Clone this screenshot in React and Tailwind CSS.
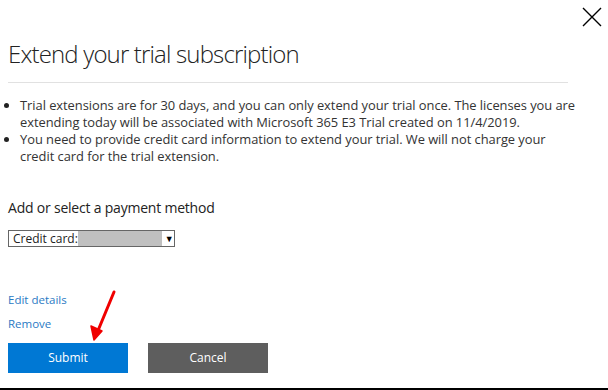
export default function App() {
  return (
    <div className="relative flex h-[390px] w-[608px] flex-col overflow-hidden border-b-2 border-black bg-white font-['Open_Sans',sans-serif] text-[#222]">
      <div className="flex justify-end pt-[7px] pr-[6px]">
        <button type="button" className="h-5 w-5 text-black">
          <svg viewBox="0 0 20 20" className="h-5 w-5" fill="none" stroke="currentColor" strokeWidth="1.4">
            <path d="M1 1 L19 19 M19 1 L1 19" />
          </svg>
        </button>
      </div>

      <div className="pl-2 pr-8">
        <h1 className="mt-[11px] text-[24px] font-light leading-[32px] tracking-[-0.035em] text-[#222]">
          Extend your trial subscription
        </h1>
        <div className="mt-[12px] h-px w-[560px] bg-[#e1e1e1]" />

        <ul className="mt-[14px] list-disc whitespace-nowrap pl-[12px] text-[12.9px] leading-[17px] tracking-[-0.003em] text-[#333] marker:text-[#222]">
          <li>
            Trial extensions are for 30 days, and you can only extend your trial once. The licenses you are
            <br />
            extending today will be associated with Microsoft 365 E3 Trial created on 11/4/2019.
          </li>
          <li>
            You need to provide credit card information to extend your trial. We will not charge your
            <br />
            credit card for the trial extension.
          </li>
        </ul>

        <h2 className="mt-[33px] text-[14px] leading-[20px] tracking-[-0.015em] text-[#222]">Add or select a payment method</h2>

        <div className="mt-[12px] flex h-[17px] w-[167px] items-center overflow-hidden border border-[#666] pl-[4px] text-[12px] text-[#222]">
          <span className="shrink-0 whitespace-nowrap leading-none">Credit card:</span>
          <span className="h-full w-[84px] shrink-0 bg-[#c0c0c0]" />
          <span className="ml-[3px] shrink-0 text-[9px] leading-none text-black">▼</span>
        </div>

        <div className="mt-[45px] flex flex-col gap-[8px] text-[11.5px] leading-[16px] text-[#2a7ac4]">
          <a href="#">Edit details</a>
          <a href="#">Remove</a>
        </div>

        <div className="mt-[11px] flex gap-5">
          <button type="button" className="h-[30px] w-[120px] bg-[#0078d4] text-[12px] text-white">
            Submit
          </button>
          <button type="button" className="h-[30px] w-[120px] bg-[#5e5e5e] text-[12px] text-white">
            Cancel
          </button>
        </div>
      </div>

      <svg className="pointer-events-none absolute left-[87px] top-[288px]" width="34" height="56" viewBox="0 0 34 56">
        <path d="M27 4 L10 45" stroke="#f00000" strokeWidth="3" strokeLinecap="round" fill="none" />
        <path d="M7 52 L4 38 L15 43 Z" fill="#f00000" stroke="#f00000" strokeWidth="1.5" strokeLinejoin="round" />
      </svg>
    </div>
  );
}
